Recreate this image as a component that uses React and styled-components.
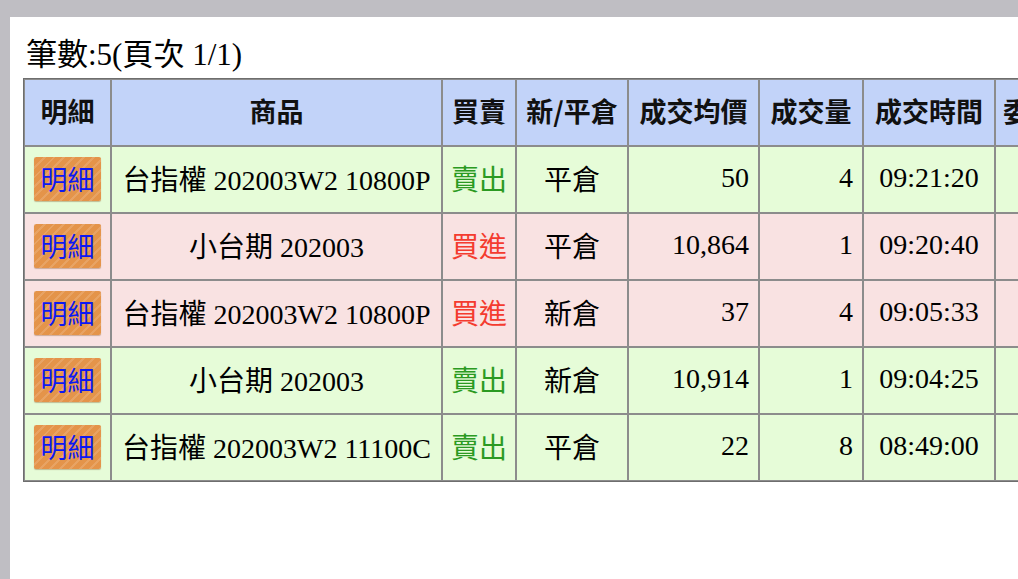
import styled, { createGlobalStyle } from 'styled-components'

const GlobalStyle = createGlobalStyle`
  html, body {
    margin: 0;
    padding: 0;
    background: #bfbec3;
    overflow: hidden;
  }
  body {
    font-family: "Liberation Serif", "Noto Sans CJK TC", serif;
  }
`

const Page = styled.div`
  margin: 17px 0 0 10px;
  background: #ffffff;
  min-height: 562px;
  width: 1200px;
`

const Caption = styled.div`
  padding: 20px 0 5px 16px;
  font-size: 31px;
  line-height: 36px;
  color: #000;
`

const Table = styled.table`
  margin-left: 13px;
  border-collapse: separate;
  border-spacing: 0;
  table-layout: fixed;
  border: 1px solid #6e6e6e;
  border-right: none;
`

const Head = styled.th`
  box-sizing: border-box;
  width: ${p => p.w}px;
  height: 67px;
  padding: 0 0 5px ${p => p.pl || 0}px;
  border: 1px solid #8c8c8c;
  background: #c2d3f9;
  font-family: "Noto Sans CJK TC", "Noto Sans", sans-serif;
  font-size: 27px;
  font-weight: 700;
  color: #111;
  white-space: nowrap;
  overflow: hidden;
  text-align: ${p => p.align || 'center'};
`

const Row = styled.tr`
  background: ${p => (p.buy ? '#f9e2e2' : '#e6fcd8')};
`

const Cell = styled.td`
  box-sizing: border-box;
  height: 67px;
  padding: 0 ${p => p.pr || 0}px 4px 0;
  border: 1px solid #8c8c8c;
  font-size: 28px;
  color: #000;
  white-space: nowrap;
  overflow: hidden;
  text-align: ${p => p.align || 'center'};
`

const Side = styled.span`
  color: ${p => (p.buy ? '#f43b2f' : '#2b9a22')};
`

const DetailButton = styled.span`
  display: inline-block;
  width: 67px;
  height: 44px;
  line-height: 43px;
  margin-top: 2px;
  border-radius: 2px;
  background-color: #e4944a;
  background-image: repeating-linear-gradient(
    -45deg,
    rgba(255, 255, 255, 0.14) 0 2px,
    rgba(255, 255, 255, 0) 2px 7px
  );
  box-shadow: 0 1px 1px rgba(120, 70, 20, 0.35);
  color: #0c19f2;
  font-family: "Noto Sans CJK TC", sans-serif;
  font-size: 27px;
  text-align: center;
  vertical-align: middle;
`

const columns = [
  { label: '明細', w: 87 },
  { label: '商品', w: 331 },
  { label: '買賣', w: 74 },
  { label: '新/平倉', w: 112 },
  { label: '成交均價', w: 131 },
  { label: '成交量', w: 104 },
  { label: '成交時間', w: 132 },
  { label: '委託書號', w: 150, align: 'left', pl: 7 },
]

const trades = [
  { product: '台指權 202003W2 10800P', buy: false, kind: '平倉', price: '50', qty: '4', time: '09:21:20' },
  { product: '小台期 202003', buy: true, kind: '平倉', price: '10,864', qty: '1', time: '09:20:40' },
  { product: '台指權 202003W2 10800P', buy: true, kind: '新倉', price: '37', qty: '4', time: '09:05:33' },
  { product: '小台期 202003', buy: false, kind: '新倉', price: '10,914', qty: '1', time: '09:04:25' },
  { product: '台指權 202003W2 11100C', buy: false, kind: '平倉', price: '22', qty: '8', time: '08:49:00' },
]

function App() {
  return (
    <Page>
      <GlobalStyle />
      <Caption>筆數:5(頁次 1/1)</Caption>
      <Table>
        <thead>
          <tr>
            {columns.map(c => (
              <Head key={c.label} w={c.w} align={c.align} pl={c.pl}>{c.label}</Head>
            ))}
          </tr>
        </thead>
        <tbody>
          {trades.map((t, i) => (
            <Row key={i} buy={t.buy ? 1 : 0}>
              <Cell><DetailButton>明細</DetailButton></Cell>
              <Cell>{t.product}</Cell>
              <Cell><Side buy={t.buy ? 1 : 0}>{t.buy ? '買進' : '賣出'}</Side></Cell>
              <Cell>{t.kind}</Cell>
              <Cell align="right" pr={9}>{t.price}</Cell>
              <Cell align="right" pr={9}>{t.qty}</Cell>
              <Cell>{t.time}</Cell>
              <Cell></Cell>
            </Row>
          ))}
        </tbody>
      </Table>
    </Page>
  )
}

export default App
